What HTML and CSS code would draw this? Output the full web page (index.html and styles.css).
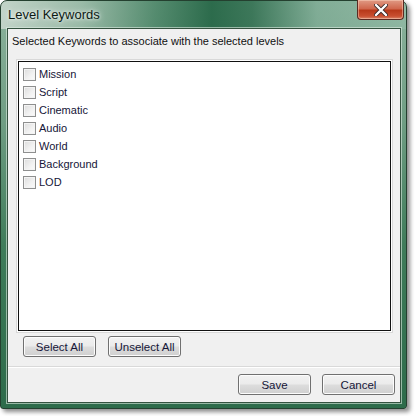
FILE: index.html
```html
<!DOCTYPE html>
<html>
<head>
<meta charset="utf-8">
<link rel="stylesheet" href="styles.css">
</head>
<body>
<div class="window">
  <div class="titlebar">
    <span class="title">Level Keywords</span>
    <div class="close">
      <svg width="14" height="12" viewBox="0 0 14 12"><path d="M2 1 L12 11 M12 1 L2 11" stroke="#3a2a2a" stroke-width="4" stroke-linecap="round"/><path d="M2 1 L12 11 M12 1 L2 11" stroke="#fff" stroke-width="2.4" stroke-linecap="round"/></svg>
    </div>
  </div>
  <div class="client">
    <div class="prompt">Selected Keywords to associate with the selected levels</div>
    <div class="listbox">
      <label class="item"><span class="cb"></span>Mission</label>
      <label class="item"><span class="cb"></span>Script</label>
      <label class="item"><span class="cb"></span>Cinematic</label>
      <label class="item"><span class="cb"></span>Audio</label>
      <label class="item"><span class="cb"></span>World</label>
      <label class="item"><span class="cb"></span>Background</label>
      <label class="item"><span class="cb"></span>LOD</label>
    </div>
    <div class="select-row">
      <button class="btn">Select All</button>
      <button class="btn">Unselect All</button>
    </div>
    <div class="footer">
      <button class="btn">Save</button>
      <button class="btn">Cancel</button>
    </div>
  </div>
</div>
</body>
</html>
```

FILE: styles.css
```css
html, body {
  margin: 0;
  padding: 0;
  background: #fff;
}
body {
  width: 416px;
  height: 416px;
  overflow: hidden;
  font-family: "Liberation Sans", "DejaVu Sans", sans-serif;
}
.window {
  width: 407px;
  height: 409px;
  box-sizing: border-box;
  border: 1px solid #24402f;
  border-radius: 7px 7px 3px 3px;
  background:
    linear-gradient(to right, rgba(200,215,205,0.9) 0%, rgba(160,190,172,0.7) 20%, rgba(50,115,82,0.6) 38%, rgba(28,95,62,0.85) 52%, rgba(35,100,68,0.75) 62%, rgba(120,168,145,0.55) 78%, rgba(150,190,170,0.5) 100%) top / 100% 28px no-repeat,
    linear-gradient(to bottom, #8cb39d 0%, #6f9d83 30%, #3f7c5a 60%, #2d6b4a 100%);
  box-shadow: 3px 3px 4px rgba(0,0,0,0.45);
  display: flex;
  flex-direction: column;
}
.titlebar {
  height: 27px;
  display: flex;
  align-items: flex-start;
}
.title {
  font-size: 13px;
  color: #0c1a14;
  padding: 6px 0 0 7px;
  text-shadow: 0 0 6px rgba(255,255,255,0.9), 0 0 3px rgba(255,255,255,0.8);
}
.close {
  margin-left: auto;
  margin-right: 2px;
  margin-top: -1px;
  width: 47px;
  height: 20px;
  box-sizing: border-box;
  border: 1px solid #5a2a22;
  border-top: none;
  border-radius: 0 0 4px 4px;
  background: linear-gradient(to bottom, #e09a84 0%, #d0684e 45%, #b8391a 55%, #c94f30 85%, #d9856a 100%);
  box-shadow: inset 0 0 0 1px rgba(255,220,200,0.45);
  display: flex;
  align-items: center;
  justify-content: center;
}
.client {
  flex: 1;
  margin: 0 5px 5px 6px;
  border: 1px solid #34523f;
  background: #f0f0f0;
  box-shadow: 0 0 0 1px rgba(220,235,225,0.6);
  display: flex;
  flex-direction: column;
  font-size: 11px;
  color: #161638;
}
.prompt {
  padding: 6px 0 0 4px;
  height: 19px;
  font-size: 11px;
  color: #111;
}
.listbox {
  margin: 7px 9px 0 10px;
  height: 270px;
  box-sizing: border-box;
  background: #fff;
  border: 1px solid #111;
  box-shadow: 0 0 0 1px #fff, 0 0 0 2px #d8d8d8;
  padding: 3px 0 0 4px;
  display: flex;
  flex-direction: column;
}
.item {
  height: 18px;
  display: flex;
  align-items: center;
  gap: 3px;
  font-size: 11px;
}
.cb {
  width: 13px;
  height: 13px;
  box-sizing: border-box;
  border: 1px solid #8e8f8f;
  background: linear-gradient(135deg, #dcdcdc 0%, #f2f2f2 60%, #fbfbfb 100%);
  box-shadow: inset 0 0 0 1px #f4f4f4;
}
.select-row {
  display: flex;
  gap: 12px;
  padding: 5px 0 0 15px;
  height: 36px;
  box-sizing: border-box;
  border-bottom: 1px solid #d9d9d9;
  box-shadow: 0 1px 0 #fff;
}
.footer {
  display: flex;
  justify-content: flex-end;
  gap: 11px;
  padding: 7px 5px 0 0;
}
.btn {
  width: 73px;
  height: 21px;
  padding: 0;
  border: 1px solid #707070;
  border-radius: 3px;
  background: linear-gradient(to bottom, #f2f2f2 0%, #ebebeb 48%, #dddddd 52%, #cfcfcf 100%);
  box-shadow: inset 0 0 0 1px #fcfcfc;
  font-family: "Liberation Sans", "DejaVu Sans", sans-serif;
  font-size: 11.5px;
  color: #161638;
}
```
